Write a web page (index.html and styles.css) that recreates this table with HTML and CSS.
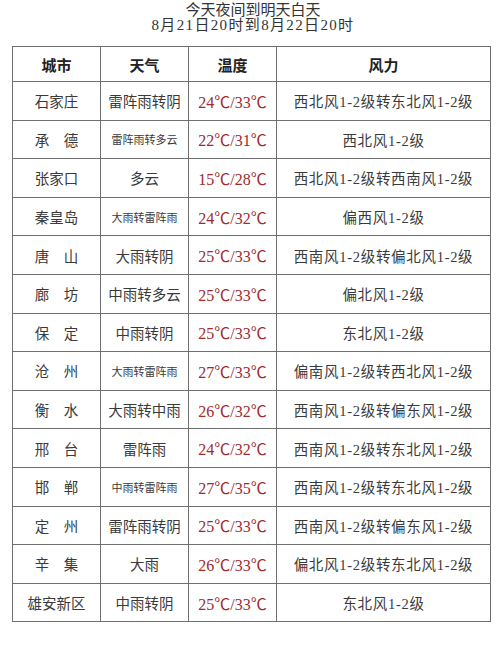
FILE: index.html
```html
<!DOCTYPE html>
<html lang="zh">
<head>
<meta charset="utf-8">
<link rel="stylesheet" href="styles.css">
</head>
<body>
<div class="title">
  <div>今天夜间到明天白天</div>
  <div class="date">8月21日20时到8月22日20时</div>
</div>
<table class="wx">
  <colgroup>
    <col class="c1"><col class="c2"><col class="c3"><col class="c4">
  </colgroup>
  <thead>
    <tr><th>城市</th><th>天气</th><th>温度</th><th>风力</th></tr>
  </thead>
  <tbody>
    <tr><td>石家庄</td><td>雷阵雨转阴</td><td class="t">24℃/33℃</td><td class="w">西北风1-2级转东北风1-2级</td></tr>
    <tr><td>承　德</td><td class="sm">雷阵雨转多云</td><td class="t">22℃/31℃</td><td class="w">西北风1-2级</td></tr>
    <tr><td>张家口</td><td>多云</td><td class="t">15℃/28℃</td><td class="w">西北风1-2级转西南风1-2级</td></tr>
    <tr><td>秦皇岛</td><td class="sm">大雨转雷阵雨</td><td class="t">24℃/32℃</td><td class="w">偏西风1-2级</td></tr>
    <tr><td>唐　山</td><td>大雨转阴</td><td class="t">25℃/33℃</td><td class="w">西南风1-2级转偏北风1-2级</td></tr>
    <tr><td>廊　坊</td><td>中雨转多云</td><td class="t">25℃/33℃</td><td class="w">偏北风1-2级</td></tr>
    <tr><td>保　定</td><td>中雨转阴</td><td class="t">25℃/33℃</td><td class="w">东北风1-2级</td></tr>
    <tr><td>沧　州</td><td class="sm">大雨转雷阵雨</td><td class="t">27℃/33℃</td><td class="w">偏南风1-2级转西北风1-2级</td></tr>
    <tr><td>衡　水</td><td>大雨转中雨</td><td class="t">26℃/32℃</td><td class="w">西南风1-2级转偏东风1-2级</td></tr>
    <tr><td>邢　台</td><td>雷阵雨</td><td class="t">24℃/32℃</td><td class="w">西南风1-2级转东北风1-2级</td></tr>
    <tr><td>邯　郸</td><td class="sm">中雨转雷阵雨</td><td class="t">27℃/35℃</td><td class="w">西南风1-2级转东北风1-2级</td></tr>
    <tr><td>定　州</td><td>雷阵雨转阴</td><td class="t">25℃/33℃</td><td class="w">西南风1-2级转偏东风1-2级</td></tr>
    <tr><td>辛　集</td><td>大雨</td><td class="t">26℃/33℃</td><td class="w">偏北风1-2级转东北风1-2级</td></tr>
    <tr><td>雄安新区</td><td>中雨转阴</td><td class="t">25℃/33℃</td><td class="w">东北风1-2级</td></tr>
  </tbody>
</table>
</body>
</html>
```

FILE: styles.css
```css
html, body {
  margin: 0;
  padding: 0;
  background: #ffffff;
}
body {
  font-family: "Liberation Serif", "Noto Sans CJK SC", serif;
  color: #3a3a3a;
}
.title {
  padding-top: 3px;
  text-align: center;
  font-size: 15px;
  line-height: 15px;
  color: #333333;
  padding-left: 6px;
}
.title .date {
  letter-spacing: 1.35px;
}
.wx {
  margin: 13px 0 0 12px;
  width: 478px;
  border-collapse: collapse;
  table-layout: fixed;
}
.c1 { width: 88px; }
.c2 { width: 88px; }
.c3 { width: 88px; }
.c4 { width: 214px; }
.wx th, .wx td {
  border: 1px solid #6f6f6f;
  text-align: center;
  vertical-align: middle;
  padding: 0;
  white-space: nowrap;
}
.wx th {
  height: 34px;
  font-size: 15px;
  font-weight: bold;
  color: #222222;
}
.wx td {
  height: 37.6px;
  font-size: 14.5px;
}
.wx td.sm {
  font-size: 11px;
}
.wx td.t {
  font-size: 16px;
  color: #a02a2c;
}
.wx td.w {
  letter-spacing: 0.7px;
}
```
